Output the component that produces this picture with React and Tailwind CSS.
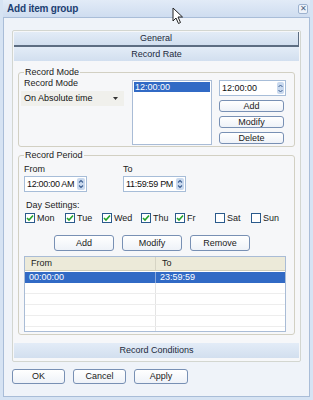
import React from 'react';

const font = { fontFamily: '"Liberation Sans", Arial, sans-serif' };

const Btn = ({ children, className = '' }) => (
  <div className={`flex items-center justify-center rounded-[3px] border border-[#7890b4] bg-gradient-to-b from-white to-[#eef2f8] text-[#1a1a1a] ${className}`}>
    {children}
  </div>
);

const Bar = ({ children, className = '' }) => (
  <div className={`flex items-center justify-center bg-gradient-to-b from-[#e3ecf7] to-[#d2dfef] text-[#1c2a3c] ${className}`}>
    {children}
  </div>
);

const Spinner = ({ value }) => (
  <div className="flex h-[16px] w-[63px] items-center overflow-hidden border border-[#a7bdd8] bg-white">
    <span className="flex-1 whitespace-nowrap pl-[2px] tracking-[-0.3px] text-[#111]">{value}</span>
    <div className="mr-[1px] flex h-[12px] w-[8px] shrink-0 flex-col items-center justify-center rounded-[2px] bg-[#c9d9ee]">
      <svg width="6" height="10" viewBox="0 0 6 10">
        <path d="M1 3.5 L3 1.5 L5 3.5" fill="none" stroke="#3d5f91" strokeWidth="1.1" />
        <path d="M1 6.5 L3 8.5 L5 6.5" fill="none" stroke="#3d5f91" strokeWidth="1.1" />
      </svg>
    </div>
  </div>
);

const Check = ({ label, checked, w }) => (
  <div className={`flex items-center ${w}`}>
    <div className="flex h-[10px] w-[10px] items-center justify-center border border-[#2a5a8c] bg-white">
      {checked && (
        <svg width="8" height="8" viewBox="0 0 8 8">
          <path d="M1 4 L3 6 L7 1.5" fill="none" stroke="#22a32a" strokeWidth="1.6" />
        </svg>
      )}
    </div>
    <span className="ml-[2px] text-[#222]">{label}</span>
  </div>
);

const days = [
  { label: 'Mon', checked: true, w: 'w-[40px]' },
  { label: 'Tue', checked: true, w: 'w-[37px]' },
  { label: 'Wed', checked: true, w: 'w-[39px]' },
  { label: 'Thu', checked: true, w: 'w-[34px]' },
  { label: 'Fr', checked: true, w: 'w-[40px]' },
  { label: 'Sat', checked: false, w: 'w-[36px]' },
  { label: 'Sun', checked: false, w: 'w-[36px]' },
];

export default function App() {
  return (
    <div style={font} className="relative flex h-[400px] w-[313px] flex-col bg-[#d6e3f3] px-[3px] pb-[3px] text-[9px] leading-[11px]">
      {/* title bar */}
      <div className="flex h-[17px] items-center justify-between bg-gradient-to-b from-[#e2ebf7] to-[#cfddf0] pl-[4px] pr-[2px]">
        <span className="text-[10px] font-bold tracking-[-0.2px] text-[#1d3f72]">Add item group</span>
        <div className="flex h-[10px] w-[10px] items-center justify-center rounded-[2px] border border-[#9db2cf] bg-[#eef3fa] text-[8px] leading-none text-[#4a5f80]">
          ✕
        </div>
      </div>

      {/* body */}
      <div className="flex flex-1 flex-col border border-[#a9bdd8] bg-[#eff3f9] px-[8px] pt-[12px]">
        <div className="flex h-[332px] flex-col rounded-[2px] border border-[#d3d6d0] bg-[#f6f7f9] p-[1px]">
          <Bar className="h-[15px] border-b-2 border-r border-[#5d6d82]">General</Bar>
          <Bar className="h-[14px]">Record Rate</Bar>

          <div className="flex flex-1 flex-col px-[4px]">
            {/* Record Mode */}
            <fieldset className="mt-[6px] rounded-[3px] border border-[#d2d0c3] pb-[1px] pl-[2px] pr-[5px]">
              <legend className="ml-[3px] px-[1px] text-[#222]">Record Mode</legend>
              <div className="flex">
                <div className="flex w-[103px] flex-col">
                  <span className="pl-[3px] text-[#222]">Record Mode</span>
                  <div className="mt-[2px] flex h-[15px] items-center justify-between bg-[#f0f0ec] pl-[3px] pr-[6px] text-[#111]">
                    <span>On Absolute time</span>
                    <svg width="5" height="3" viewBox="0 0 5 3">
                      <path d="M0 0 H5 L2.5 3 Z" fill="#333" />
                    </svg>
                  </div>
                </div>
                <div className="ml-[8px] mt-[2px] h-[65px] w-[80px] border border-[#a9bcd6] bg-white p-[1px]">
                  <div className="h-[10px] bg-[#316ac5] pl-[1px] text-white">12:00:00</div>
                </div>
                <div className="ml-[7px] mt-[2px] flex w-[67px] flex-col">
                  <div className="flex h-[16px] items-center justify-between border border-[#a7bdd8] bg-white pl-[2px] pr-[1px]">
                    <span className="text-[#111]">12:00:00</span>
                    <div className="flex h-[12px] w-[7px] items-center justify-center rounded-[2px] bg-[#c9d9ee]">
                      <svg width="5" height="9" viewBox="0 0 5 9">
                        <path d="M0.5 3 L2.5 1 L4.5 3" fill="none" stroke="#3d5f91" strokeWidth="1" />
                        <path d="M0.5 6 L2.5 8 L4.5 6" fill="none" stroke="#3d5f91" strokeWidth="1" />
                      </svg>
                    </div>
                  </div>
                  <Btn className="mt-[4px] h-[12px] w-[65px]">Add</Btn>
                  <Btn className="mt-[4px] h-[12px] w-[65px]">Modify</Btn>
                  <Btn className="mt-[4px] h-[12px] w-[65px]">Delete</Btn>
                </div>
              </div>
            </fieldset>

            {/* Record Period */}
            <fieldset className="mt-[3px] rounded-[3px] border border-[#d2d0c3] pb-[2px] pl-[5px] pr-[5px]">
              <legend className="ml-[0px] px-[1px] text-[#222]">Record Period</legend>
              <div className="mt-[3px] flex">
                <div className="flex w-[99px] flex-col">
                  <span className="text-[#222]">From</span>
                  <div className="mt-[1px]"><Spinner value="12:00:00 AM" /></div>
                </div>
                <div className="flex flex-col">
                  <span className="text-[#222]">To</span>
                  <div className="mt-[1px]"><Spinner value="11:59:59 PM" /></div>
                </div>
              </div>
              <div className="ml-[2px] mt-[8px] text-[#222]">Day Settings:</div>
              <div className="ml-[1px] mt-[1px] flex h-[12px]">
                {days.map(d => (
                  <Check key={d.label} {...d} />
                ))}
              </div>
              <div className="mt-[11px] flex justify-center gap-[8px] pr-[9px]">
                <Btn className="h-[16px] w-[60px]">Add</Btn>
                <Btn className="h-[16px] w-[60px]">Modify</Btn>
                <Btn className="h-[16px] w-[60px]">Remove</Btn>
              </div>
              <div className="mt-[5px] h-[76px] w-[262px] overflow-hidden border border-[#a9bcd6] bg-white">
                <div className="flex h-[14px] border-b border-[#cfcdb8] bg-[#ecead9] text-[#222]">
                  <div className="flex w-[131px] items-center border-r border-[#d6d4c4] pl-[6px]">From</div>
                  <div className="flex flex-1 items-center pl-[6px]">To</div>
                </div>
                <div className="mt-[1px] flex h-[11px] bg-[#316ac5] text-white">
                  <div className="w-[131px] border-r border-[#8aa8db] pl-[4px]">00:00:00</div>
                  <div className="flex-1 pl-[4px]">23:59:59</div>
                </div>
                {[0, 1, 2, 3, 4].map(i => (
                  <div key={i} className="flex h-[11px] border-b border-[#ededed]">
                    <div className="w-[131px] border-r border-[#e4e4e4]" />
                    <div className="flex-1" />
                  </div>
                ))}
              </div>
            </fieldset>
            <div className="flex-1" />
          </div>

          <Bar className="mb-[2px] h-[15px]">Record Conditions</Bar>
        </div>

        <div className="mt-[7px] flex gap-[8px]">
          <Btn className="h-[15px] w-[53px]">OK</Btn>
          <Btn className="h-[15px] w-[53px]">Cancel</Btn>
          <Btn className="h-[15px] w-[54px]">Apply</Btn>
        </div>
      </div>

      {/* mouse pointer */}
      <svg className="absolute left-[172px] top-[7px]" width="12" height="18" viewBox="0 0 12 18">
        <path d="M1 1 L1 14 L4 11 L6.5 16.5 L8.5 15.5 L6 10 L10.5 10 Z" fill="white" stroke="#222" strokeWidth="1" strokeLinejoin="round" />
      </svg>
    </div>
  );
}
